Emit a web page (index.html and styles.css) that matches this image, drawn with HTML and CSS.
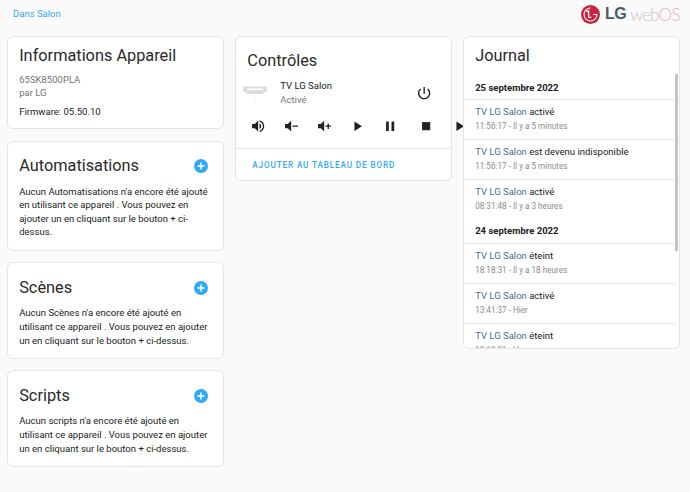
FILE: index.html
```html
<!DOCTYPE html>
<html lang="fr">
<head>
<meta charset="utf-8">
<title>TV LG Salon</title>
<link rel="stylesheet" href="styles.css">
</head>
<body>
<header class="top">
  <a class="area">Dans Salon</a>
  <div class="logo">
    <svg class="lg-mark" width="19" height="19" viewBox="0 0 20 20"><circle cx="10" cy="10" r="10" fill="#c8243f"/><path d="M10 3.2a6.8 6.8 0 1 0 6.8 6.8h-4" fill="none" stroke="#fff" stroke-width="1.1"/><path d="M8 5.5v7.5h3" fill="none" stroke="#fff" stroke-width="1.3"/><circle cx="6.4" cy="6.6" r="1" fill="#fff"/></svg>
    <span class="lg">LG</span><span class="web">web</span><span class="os">OS</span>
  </div>
</header>
<main class="columns">
  <section class="column">
    <div class="card info">
      <h2 class="title">Informations Appareil</h2>
      <div class="muted">65SK8500PLA</div>
      <div class="muted">par LG</div>
      <div class="firmware">Firmware: 05.50.10</div>
    </div>
    <div class="card">
      <div class="head"><h2 class="title">Automatisations</h2><svg class="plus" viewBox="0 0 14 14"><circle cx="7" cy="7" r="7" fill="#2fa9f2"/><path d="M3.5 7h7M7 3.5v7" stroke="#fff" stroke-width="1.5"/></svg></div>
      <p class="text">Aucun Automatisations n'a encore été ajouté en utilisant ce appareil . Vous pouvez en ajouter un en cliquant sur le bouton + ci-dessus.</p>
    </div>
    <div class="card">
      <div class="head"><h2 class="title">Scènes</h2><svg class="plus" viewBox="0 0 14 14"><circle cx="7" cy="7" r="7" fill="#2fa9f2"/><path d="M3.5 7h7M7 3.5v7" stroke="#fff" stroke-width="1.5"/></svg></div>
      <p class="text">Aucun Scènes n'a encore été ajouté en utilisant ce appareil . Vous pouvez en ajouter un en cliquant sur le bouton + ci-dessus.</p>
    </div>
    <div class="card">
      <div class="head"><h2 class="title">Scripts</h2><svg class="plus" viewBox="0 0 14 14"><circle cx="7" cy="7" r="7" fill="#2fa9f2"/><path d="M3.5 7h7M7 3.5v7" stroke="#fff" stroke-width="1.5"/></svg></div>
      <p class="text">Aucun scripts n'a encore été ajouté en utilisant ce appareil . Vous pouvez en ajouter un en cliquant sur le bouton + ci-dessus.</p>
    </div>
  </section>
  <section class="column">
    <div class="card controls">
      <h2 class="title ctitle">Contrôles</h2>
      <div class="entity">
        <svg class="hdmi" width="24" height="16" viewBox="0 0 24 16"><path d="M0 2.5q0-1 1-1h22q1 0 1 1v3.5q0 1-1 1h-2l-1 2H4l-1-2H1q-1 0-1-1z" fill="#dcdcdc"/><rect x="4" y="3.5" width="16" height="1.6" fill="#fff"/><rect x="11.5" y="13.5" width="1" height="1" fill="#ccc"/></svg>
        <div class="entity-text"><div class="name">TV LG Salon</div><div class="muted">Activé</div></div>
        <svg class="ico power" viewBox="0 0 24 24"><path d="M13 3h-2v10h2zm4.83 2.17l-1.42 1.42C17.99 7.86 19 9.81 19 12c0 3.87-3.13 7-7 7s-7-3.13-7-7c0-2.19 1.01-4.14 2.58-5.42L6.17 5.17C4.23 6.82 3 9.26 3 12c0 4.97 4.03 9 9 9s9-4.03 9-9c0-2.74-1.23-5.18-3.17-6.83z"/></svg>
      </div>
      <div class="buttons">
        <svg class="ico" viewBox="0 0 24 24"><path d="M3 9v6h4l5 5V4L7 9zm13.5 3c0-1.77-1.02-3.29-2.5-4.03v8.05c1.48-.73 2.5-2.25 2.5-4.02zM14 3.23v2.06c2.89.86 5 3.54 5 6.71s-2.11 5.85-5 6.71v2.06c4.01-.91 7-4.49 7-8.77s-2.99-7.86-7-8.77z"/></svg>
        <svg class="ico" viewBox="0 0 24 24"><path d="M3 9v6h4l5 5V4L7 9zM14 11h8v2h-8z"/></svg>
        <svg class="ico" viewBox="0 0 24 24"><path d="M3 9v6h4l5 5V4L7 9zM14 11h3V8h2v3h3v2h-3v3h-2v-3h-3z"/></svg>
        <svg class="ico" viewBox="0 0 24 24"><path d="M8 5v14l11-7z"/></svg>
        <svg class="ico" viewBox="0 0 24 24"><path d="M6 19h4V5H6zm8-14v14h4V5z"/></svg>
        <svg class="ico stop" viewBox="0 0 24 24"><path d="M6 6h12v12H6z"/></svg>
        <svg class="ico" viewBox="0 0 24 24"><path d="M8 5v14l11-7z"/></svg>
      </div>
      <div class="actions"><a class="action">AJOUTER AU TABLEAU DE BORD</a></div>
    </div>
  </section>
  <section class="column">
    <div class="card journal">
      <h2 class="title jtitle">Journal</h2>
      <div class="scrollbar"></div>
      <div class="date first">25 septembre 2022</div>
      <div class="entry"><div class="line"><span class="link">TV LG Salon</span> activé</div><div class="time">11:56:17 - Il y a 5 minutes</div></div>
      <div class="entry"><div class="line"><span class="link">TV LG Salon</span> est devenu indisponible</div><div class="time">11:56:17 - Il y a 5 minutes</div></div>
      <div class="entry last"><div class="line"><span class="link">TV LG Salon</span> activé</div><div class="time">08:31:48 - Il y a 3 heures</div></div>
      <div class="date">24 septembre 2022</div>
      <div class="entry"><div class="line"><span class="link">TV LG Salon</span> éteint</div><div class="time">18:18:31 - Il y a 18 heures</div></div>
      <div class="entry"><div class="line"><span class="link">TV LG Salon</span> activé</div><div class="time">13:41:37 - Hier</div></div>
      <div class="entry"><div class="line"><span class="link">TV LG Salon</span> éteint</div><div class="time">13:13:21 - Hier</div></div>
    </div>
  </section>
</main>
</body>
</html>
```
FILE: styles.css
```css
* { box-sizing: border-box; }
html, body { margin: 0; height: 492px; overflow: hidden; }
body { background: #fafafa; font-family: Roboto, "Liberation Sans", sans-serif; font-size: 9.52px; color: #212121; }
.top { height: 35.5px; display: flex; justify-content: space-between; padding: 0 10px 0 13px; }
.area { color: #2fa9f2; font-size: 9.52px; line-height: 27px; }
.logo { display: flex; align-items: center; height: 28px; }
.lg-mark { margin-right: 5px; }
.lg { font-size: 16px; font-weight: 700; color: #4d5a66; letter-spacing: -0.5px; margin-right: 4px; font-family: "Liberation Sans", sans-serif; }
.web { font-size: 17px; font-weight: 300; color: #c8c8c8; font-family: Lato, sans-serif; letter-spacing: -1px; }
.os { font-size: 17px; font-weight: 300; color: #eda9bf; font-family: Lato, sans-serif; letter-spacing: -0.5px; }
.columns { display: grid; grid-template-columns: repeat(3, 216.6px); column-gap: 11.4px; padding-left: 7.3px; align-items: start; }
.column { display: flex; flex-direction: column; gap: 11.4px; min-width: 0; }
.card { background: #fff; border: 1px solid #e4e4e4; border-radius: 6px; padding: 0 10.9px 11px; }
.title { margin: 0; font-size: 16.32px; font-weight: 400; line-height: 24px; color: #2a2a2a; }
.info { height: 93.7px; padding-top: 7px; }
.info .title { margin-bottom: 5px; }
.muted { color: #757575; line-height: 13.6px; }
.firmware { margin-top: 5px; line-height: 13.6px; }
.head { display: flex; justify-content: space-between; align-items: center; padding: 12.6px 0 6.4px; margin-right: 4.5px; }
.plus { width: 14px; height: 14px; flex: none; }
.text { margin: 0; line-height: 13.6px; }
.controls { height: 145.2px; padding: 0; position: relative; overflow: visible; }
.ctitle { padding: 12.5px 11px 0; line-height: 24px; }
.entity { display: flex; align-items: center; height: 28px; margin-top: 6px; padding: 0 19px 0 7px; }
.hdmi { flex: none; margin-right: 13px; }
.entity-text { flex: 1; }
.name { line-height: 13.6px; color: #212121; }
.ico { width: 16.32px; height: 16.32px; fill: #212121; flex: none; display: block; }
.buttons { display: flex; height: 33px; align-items: center; padding-left: 13.5px; gap: 16.7px; width: 240px; margin-top: 3px; }
.stop { margin-left: 3px; }
.actions { border-top: 1px solid #e4e4e4; height: 32px; padding: 0 16px; margin-top: 5px; line-height: 31px; }
.action { color: #2fa9f2; font-size: 8.16px; font-weight: 500; letter-spacing: 0.87px; }
.journal { height: 313px; padding: 0; overflow: hidden; position: relative; z-index: 1; }
.jtitle { padding: 7.5px 10.9px 0; height: 37.5px; }
.scrollbar { position: absolute; right: 1px; top: 37px; width: 3px; height: 177px; background: #c4c4c4; }
.date { font-weight: 700; line-height: 13.5px; padding: 7px 10.9px 8px; color: #212121; height: 26px; border-bottom: 1px solid #e8e8e8; margin-right: 4px; }
.date:not(.first) { padding-top: 6px; }
.entry { height: 40px; padding: 5px 10.9px 0; border-bottom: 1px solid #e8e8e8; margin-right: 4px; }
.entry.last { border-bottom: 0; height: 38px; }
.line { line-height: 13.6px; }
.link { color: #4a6d94; }
.time { color: #8a8a8a; font-size: 8.16px; line-height: 14px; }
```
